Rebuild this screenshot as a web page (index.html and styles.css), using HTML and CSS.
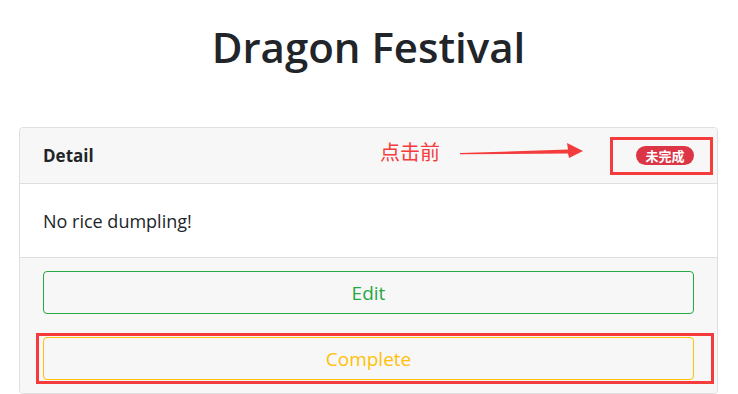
FILE: index.html
```html
<!DOCTYPE html>
<html lang="en">
<head>
    <meta charset="UTF-8">
    <meta name="viewport" content="width=device-width, initial-scale=1.0">
    <title>Dragon Festival</title>
    <link rel="stylesheet" href="styles.css">
</head>
<body>
    <div class="container">
        <h1>Dragon Festival</h1>

        <div class="card">
            <div class="card-header">
                <span class="card-title">Detail</span>
                <span class="badge">未完成</span>

                <!-- screenshot annotation -->
                <span class="note-text">点击前</span>
                <svg class="note-arrow" width="124" height="18" viewBox="0 0 124 18">
                    <path d="M0 11 L108 7.5 L107 1 L123 9 L109 16 L108 11.5 L0 12.3 Z" fill="#f43c3c"/>
                </svg>
                <span class="mark mark-badge"></span>
            </div>

            <div class="card-body">
                No rice dumpling!
            </div>

            <div class="card-footer">
                <button class="btn btn-edit">Edit</button>
                <div class="btn-wrap">
                    <button class="btn btn-complete">Complete</button>
                    <span class="mark mark-complete"></span>
                </div>
            </div>
        </div>
    </div>
</body>
</html>
```

FILE: styles.css
```css
body {
    font-family: "Open Sans", "Noto Sans", "Noto Sans CJK SC", sans-serif;
    margin: 0;
    background-color: #fff;
    color: #212529;
}
.container {
    padding: 0 20px 0 19px;
}
h1 {
    margin: 0;
    padding: 20px 0 0;
    height: 127px;
    box-sizing: border-box;
    text-align: center;
    font-size: 42px;
    font-weight: 600;
    line-height: 54px;
    color: #212529;
}
.card {
    border: 1px solid #dfdfdf;
    border-radius: 4px;
}
.card-header {
    position: relative;
    height: 55px;
    padding: 0 23px;
    display: flex;
    align-items: center;
    justify-content: space-between;
    background-color: #f7f7f7;
    border-bottom: 1px solid #dfdfdf;
    border-radius: 4px 4px 0 0;
}
.card-title {
    font-size: 17px;
    font-weight: 700;
}
.badge {
    display: inline-block;
    width: 58px;
    height: 19px;
    line-height: 19px;
    text-align: center;
    border-radius: 10px;
    background-color: #dc3545;
    color: #fff;
    font-family: "Noto Sans CJK SC", sans-serif;
    font-size: 13px;
    font-weight: 700;
}
.note-text {
    position: absolute;
    left: 360px;
    top: 10px;
    font-family: "Noto Sans CJK SC", sans-serif;
    font-size: 20px;
    line-height: 28px;
    color: #f43c3c;
}
.note-arrow {
    position: absolute;
    left: 440px;
    top: 14px;
}
.mark {
    position: absolute;
    border: 3px solid #f43c3c;
    pointer-events: none;
}
.mark-badge {
    left: 590px;
    top: 9px;
    width: 97px;
    height: 32px;
}
.card-body {
    height: 73px;
    padding: 0 23px;
    display: flex;
    align-items: center;
    font-size: 18px;
    border-bottom: 1px solid #dfdfdf;
}
.card-footer {
    background-color: #f7f7f7;
    padding: 13px 23px 13px;
    display: flex;
    flex-direction: column;
    gap: 23px;
    border-radius: 0 0 4px 4px;
}
.btn-wrap {
    position: relative;
}
.btn {
    display: block;
    width: 100%;
    height: 43px;
    background-color: transparent;
    border: 1px solid;
    border-radius: 4px;
    font-family: "Open Sans", "Noto Sans", sans-serif;
    font-size: 19px;
    cursor: pointer;
}
.btn-edit {
    color: #28a745;
    border-color: #28a745;
}
.btn-complete {
    color: #ffc107;
    border-color: #ffc107;
}
.mark-complete {
    left: -7px;
    right: -20px;
    top: -4px;
    bottom: -4px;
}
```
